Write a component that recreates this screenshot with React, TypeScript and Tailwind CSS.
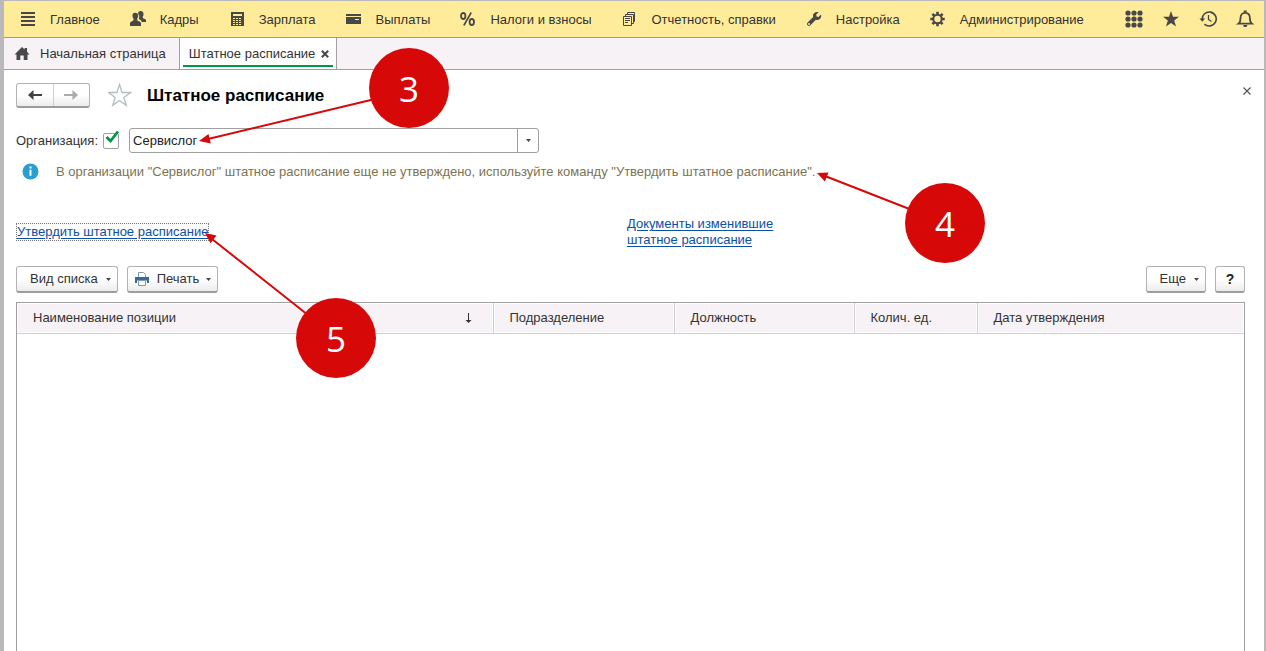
import { FC, ReactNode } from 'react'

interface NavItemProps {
 label: string
 children: ReactNode
}

const NavItem: FC<NavItemProps> = ({ label, children }): JSX.Element => {
 return (
  <a href="#" className="flex shrink-0 items-center gap-3.5 whitespace-nowrap">
   <svg className="h-4 w-4 shrink-0" viewBox="0 0 16 16" fill="#484848" aria-hidden="true">
    {children}
   </svg>
   <span className="pt-0.5">{label}</span>
  </a>
 )
}

const Caret: FC = (): JSX.Element => (
 <svg className="h-[3px] w-[5px] shrink-0" viewBox="0 0 5 3" fill="#444" aria-hidden="true">
  <path d="M0 0h5L2.5 3z" />
 </svg>
)

interface HeadCellProps {
 label: string
 width?: string
 sorted?: boolean
}

const HeadCell: FC<HeadCellProps> = ({ label, width = '', sorted }): JSX.Element => (
 <th className={`border-r border-[#cfcfcf] p-px font-normal last:border-r-0 ${width}`}>
  <div className="flex h-7 items-center justify-between bg-[#f7f2f6] pl-[15px] pr-5">
   {label}
   {sorted && (
    <svg className="h-2.5 w-[7px]" viewBox="0 0 7 10" fill="#333" aria-label="По возрастанию">
     <path d="M3 0h1v7h2.500l-3 3-3-3H3z" />
    </svg>
   )}
  </div>
 </th>
)

interface CalloutProps {
 value: string
 place: string
}

const Callout: FC<CalloutProps> = ({ value, place }): JSX.Element => (
 <div
  className={`absolute flex h-20 w-20 items-center justify-center rounded-full bg-[#d70808] pt-px font-['Open_Sans',sans-serif] text-[35px] font-medium leading-none text-white ${place}`}>
  {value}
 </div>
)

const buttonStyle =
 'flex h-[27px] items-center rounded-[3px] border border-[#b3b3b3] border-b-2 border-b-[#9c9c9c] bg-linear-to-b from-white from-50% to-[#ececec]'

const Header: FC = (): JSX.Element => {
 return (
  <header className="flex h-[37px] items-center justify-between border-b border-[#bfa600] bg-[#ffec9b] pl-4 pr-2.5">
   <nav className="flex items-center gap-[30px]">
    <NavItem label="Главное">
     <path d="M1 1h14v2H1zM1 5h14v2H1zM1 9h14v2H1zM1 13h14v2H1z" />
    </NavItem>
    <NavItem label="Кадры">
     <path d="M10.500 0C8.700 0 8 1.300 8.200 3c.9.7 1.300 2 .9 3.600L8.800 8l2.200 1.200.7 1.800H16V9.200C16 8 13.900 7.800 12.700 7V5.700c.6-.6.8-1.400.8-2.700 0-1.800-1-3-3-3z" />
     <path d="M5 1.800c-2 0-2.700 1.300-2.500 3.200.1 1.200.4 2 1 2.600v1.600C2.500 10.300 0 10.200 0 12.300V15h11v-2.700c0-2.100-2.800-2-3.800-3.100V7.600c.6-.6.9-1.400 1-2.600.1-2-.9-3.200-3.200-3.200z" />
    </NavItem>
    <NavItem label="Зарплата">
     <path
      fillRule="evenodd"
      d="M2 1h13v14H2zM4 3v2h9V3zM4 7v1h2V7zm3 0v1h2V7zm3 0v1h2V7zM4 9v1h2V9zm3 0v1h2V9zm3 0v1h2V9zM4 11v1h2v-1zm3 0v1h2v-1zm3 0v1h2v-1zM4 13v1h2v-1zm3 0v1h2v-1zm3 0v1h2v-1z"
     />
    </NavItem>
    <NavItem label="Выплаты">
     <path fillRule="evenodd" d="M0 3h15v2H0zM0 6h15v7H0zM9 8v1h4V8z" />
    </NavItem>
    <NavItem label="Налоги и взносы">
     <g fill="none" stroke="#484848" strokeWidth="1.800">
      <ellipse cx="3.200" cy="5" rx="2.200" ry="3" />
      <ellipse cx="11.800" cy="11" rx="2.200" ry="3" />
      <path d="M11.200 1.500L3.800 14.500" strokeWidth="1.600" />
     </g>
    </NavItem>
    <NavItem label="Отчетность, справки">
     <g fill="none" stroke="#484848">
      <path d="M1.500 5.500h8v9h-8zM3.500 5V3.500h8v9H10M5.500 3V1.500h7v9H12M3 7.500h5M3 9.500h5M3 11.500h3" />
     </g>
    </NavItem>
    <NavItem label="Настройка">
     <path
      fillRule="evenodd"
      d="M12.700 1.200L10.200 3.600l.4 1.900 1.900.4L15 3.500c.5 1.700.1 3.300-1.100 4.400-1.200 1-2.600 1.200-4 .8l-5.500 5.600c-.8.8-2 .8-2.800 0-.8-.8-.8-2 0-2.800L7.200 6C6.800 4.600 7 3.300 8.100 2.200c1.200-1.200 2.900-1.500 4.600-1zM3 12a1 1 0 100 2 1 1 0 000-2z"
     />
    </NavItem>
    <NavItem label="Администрирование">
     <g fill="none" stroke="#484848">
      <circle cx="7.500" cy="8" r="4.200" strokeWidth="2" />
      <path
       strokeWidth="2.600"
       d="M7.500 .8v3M7.500 12.200v3M.3 8h3M11.700 8h3M2.400 2.900l2 2M10.600 11.100l2 2M2.400 13.100l2-2M10.600 4.900l2-2"
      />
     </g>
    </NavItem>
   </nav>
   <div className="flex shrink-0 items-center gap-[19px] text-[#484848]">
    <button aria-label="Меню функций">
     <svg className="h-[18px] w-[18px]" viewBox="0 0 18 18" fill="currentColor">
      <circle cx="3" cy="3" r="2.600" />
      <circle cx="9" cy="3" r="2.600" />
      <circle cx="15" cy="3" r="2.600" />
      <circle cx="3" cy="9" r="2.600" />
      <circle cx="9" cy="9" r="2.600" />
      <circle cx="15" cy="9" r="2.600" />
      <circle cx="3" cy="15" r="2.600" />
      <circle cx="9" cy="15" r="2.600" />
      <circle cx="15" cy="15" r="2.600" />
     </svg>
    </button>
    <button aria-label="Избранное">
     <svg className="h-[18px] w-[18px]" viewBox="0 0 18 18" fill="currentColor">
      <path d="M9 1l2 5.800h6l-4.800 3.700L14 16.500l-5-3.600-5 3.600 1.800-6L1 6.800h6z" />
     </svg>
    </button>
    <button aria-label="История">
     <svg className="h-[18px] w-[18px]" viewBox="0 0 18 18" fill="none" stroke="currentColor">
      <path d="M3.200 9.500a7 7 0 112.200 4.600" strokeWidth="1.600" />
      <path d="M.5 8.500h5.600L3.300 11.800z" fill="currentColor" stroke="none" />
      <path d="M9.500 5v4.500l3 2" strokeWidth="1.300" />
     </svg>
    </button>
    <button aria-label="Уведомления">
     <svg className="h-[18px] w-[18px]" viewBox="0 0 18 18" fill="none" stroke="currentColor">
      <path
       d="M2.500 13.700c1.800-1.200 2-2.700 2-5.500C4.500 5 6 2.800 9.200 2.800s4.700 2.200 4.700 5.400c0 2.800.2 4.300 2 5.500z"
       strokeWidth="1.800"
      />
      <path d="M7.700 2.500V.5h3v2zM7 15h4.500l-1 2H8z" fill="currentColor" stroke="none" />
     </svg>
    </button>
   </div>
  </header>
 )
}

const Tabs: FC = (): JSX.Element => {
 return (
  <div className="flex h-8 border-b border-[#a0a0a0] bg-[#f7f2f6]">
   <button className="flex items-center gap-2.5 pl-2.5 pr-[13px]">
    <svg className="h-4 w-4" viewBox="0 0 16 16" fill="#484848" aria-hidden="true">
     <path d="M8 1l2.600 2.500V2H13v3.700L15.500 8.500H13.500V14H9.700V9.500H6.300V14H2.500V8.500H.5z" />
    </svg>
    Начальная страница
   </button>
   <div className="flex flex-col border-x border-[#a0a0a0] bg-white px-[3px]">
    <div className="mb-0.5 flex flex-1 items-center gap-1.5 border-b-2 border-[#009646] pl-1.5 pr-1 pt-1">
     <button>Штатное расписание</button>
     <button aria-label="Закрыть вкладку">
      <svg className="h-2 w-2" viewBox="0 0 8 8" stroke="#484848" strokeWidth="2">
       <path d="M.8.800l6.400 6.400M7.200.8L.8 7.200" />
      </svg>
     </button>
    </div>
   </div>
  </div>
 )
}

const App: FC = (): JSX.Element => {
 return (
  <div className="relative flex min-h-screen flex-col overflow-hidden border-l-4 border-r-2 border-t border-[#b9b9bb] bg-white font-['Liberation_Sans',Arial,sans-serif] text-[13px] leading-4 text-[#333]">
   <Header />
   <Tabs />
   <main className="flex flex-1 flex-col pl-3 pr-[19px] pt-3">
    <div className="flex items-center">
     <div className="flex h-[25px] w-[74px] rounded-[3px] border border-[#b3b3b3] border-b-2 border-b-[#9c9c9c] bg-linear-to-b from-white from-50% to-[#ececec]">
      <button className="flex flex-1 items-center justify-center border-r border-[#d0d0d0]" aria-label="Назад">
       <svg className="h-3 w-3.5" viewBox="0 0 14 12" fill="#404040">
        <path d="M0 6l5.500-5V5H14v2H5.500v4z" />
       </svg>
      </button>
      <button className="flex flex-1 items-center justify-center" aria-label="Вперед">
       <svg className="h-3 w-3.5" viewBox="0 0 14 12" fill="#aaa">
        <path d="M14 6L8.500 1V5H0v2h8.500v4z" />
       </svg>
      </button>
     </div>
     <button className="ml-[18px]" aria-label="Добавить в избранное">
      <svg className="h-6 w-6" viewBox="0 0 24 24" fill="none" stroke="#b4bcc4" strokeWidth="1.300">
       <path d="M11.500 1.500l2.600 8h8.400l-6.700 4.900 2.500 8-6.800-4.900-6.800 4.900 2.500-8L.5 9.500h8.400z" />
      </svg>
     </button>
     <h1 className="ml-[15px] pt-0.5 text-[17px] font-bold leading-6 text-black">Штатное расписание</h1>
     <button className="-mr-1.5 mb-2 ml-auto" aria-label="Закрыть">
      <svg className="h-2 w-2" viewBox="0 0 8 8" stroke="#555" strokeWidth="1.200">
       <path d="M.5.500l7 7M7.500.5l-7 7" />
      </svg>
     </button>
    </div>

    <div className="mt-5 flex items-center">
     <label htmlFor="byOrg">Организация:</label>
     <span className="relative ml-[5px] flex h-4 w-4">
      <input
       id="byOrg"
       type="checkbox"
       defaultChecked
       className="h-4 w-4 appearance-none rounded-[2px] border border-[#a0a0a0] bg-white"
      />
      <svg className="pointer-events-none absolute -top-1 left-0.5 h-4 w-4" viewBox="0 0 16 16" fill="none" stroke="#009646" strokeWidth="2.800">
       <path d="M1.500 8l4 4L13 2.500" />
      </svg>
     </span>
     <div className="ml-2.5 flex h-[25px] w-[410px] rounded-[3px] border border-[#a0a0a0]">
      <input aria-label="Организация" defaultValue="Сервислог" className="min-w-0 flex-1 px-[3px] text-[#222] outline-none" />
      <button className="flex w-[21px] items-center justify-center border-l border-[#a0a0a0]" aria-label="Выбрать">
       <Caret />
      </button>
     </div>
    </div>

    <div className="mt-2.5 flex items-center pl-1.5 text-[#7d7350]">
     <svg className="h-[17px] w-[17px]" viewBox="0 0 17 17" aria-hidden="true">
      <circle cx="8.500" cy="8.500" r="8" fill="#279fd0" />
      <path d="M7.500 3.500h2v2h-2zM7.500 6.800h2v6h-2z" fill="#fff" />
     </svg>
     <p className="ml-[17px] whitespace-nowrap">
      В организации "Сервислог" штатное расписание еще не утверждено, используйте команду "Утвердить штатное расписание".
     </p>
    </div>

    <div className="mt-9 flex items-center text-[#0b4fa8]">
     <div className="w-[611px]">
      <a href="#" className="inline-block whitespace-nowrap border border-dotted border-[#777] underline underline-offset-2">
       Утвердить штатное расписание
      </a>
     </div>
     <a href="#" className="w-[150px] underline underline-offset-2">
      Документы изменившие штатное расписание
     </a>
    </div>

    <div className="mt-[18px] flex items-center gap-[9px]">
     <button className={`${buttonStyle} gap-2 pl-[13px] pr-1.5`}>
      Вид списка
      <Caret />
     </button>
     <button className={`${buttonStyle} gap-[7px] px-1.5`}>
      <svg className="h-4 w-4" viewBox="0 0 16 16" aria-hidden="true">
       <path d="M4.500 6V1.500h5l2 2V6" fill="#fff" stroke="#7d98b0" />
       <path d="M1 6h14v6h-2V9.500H3V12H1z" fill="#356a9a" />
       <path d="M4.500 9.500h7v5h-7z" fill="#fff" stroke="#7d98b0" />
      </svg>
      <span>Печать</span>
      <Caret />
     </button>
     <button className={`${buttonStyle} ml-auto gap-2 pl-[13px] pr-1.5`}>
      Еще
      <Caret />
     </button>
     <button className={`${buttonStyle} w-[30px] justify-center text-sm font-bold text-[#222]`}>?</button>
    </div>

    <div className="mt-[9px] flex-1 border border-b-0 border-[#a0a0a0]">
     <table className="w-full table-fixed border-collapse">
      <thead>
       <tr className="border-b border-[#cfcfcf] text-left">
        <HeadCell label="Наименование позиции" width="w-[476px]" sorted />
        <HeadCell label="Подразделение" width="w-[181px]" />
        <HeadCell label="Должность" width="w-[180px]" />
        <HeadCell label="Колич. ед." width="w-[123px]" />
        <HeadCell label="Дата утверждения" />
       </tr>
      </thead>
      <tbody />
     </table>
    </div>
   </main>

   {/* numbered steps over the form */}
   <div className="pointer-events-none absolute -left-1 -top-px h-[400px] w-[1000px]">
    <svg className="absolute inset-0 h-full w-full" viewBox="0 0 1000 400" stroke="#d70808" strokeWidth="2" fill="#d70808" aria-hidden="true">
     <path d="M375 99L208 139M912 210L825 176M308 315L212 239" />
     <path stroke="none" d="M199 141l9.500-7 2.300 9.500zM817 173l11.500-.5-3.600 9zM205 233l11.500 2.500-6 7.800z" />
    </svg>
    <Callout value="3" place="left-[369px] top-12" />
    <Callout value="4" place="left-[905px] top-[183px]" />
    <Callout value="5" place="left-[296px] top-[298px]" />
   </div>
  </div>
 )
}

export default App
